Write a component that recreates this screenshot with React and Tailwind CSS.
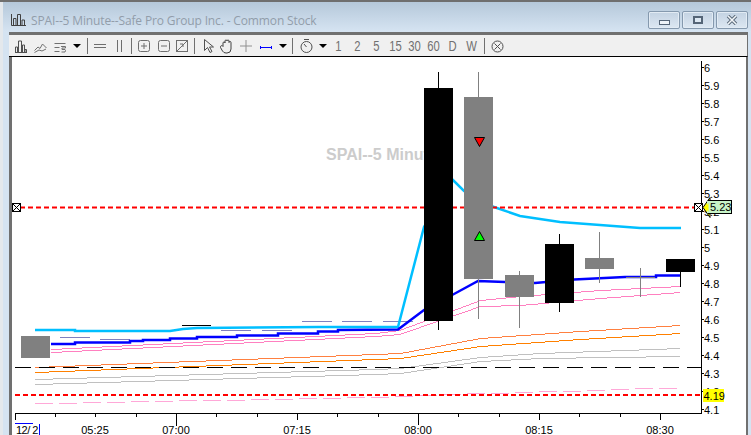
function yAt(pts, x) {
  let seg = 0;
  while (seg < pts.length - 2 && x >= pts[seg + 1][0]) seg++;
  const [ax, ay] = pts[seg];
  const [bx, by] = pts[seg + 1];
  return Math.round(ay + ((by - ay) * (x - ax)) / (bx - ax)) + 0.5;
}

function lad(pts, step = 0, gap = 0) {
  const x0 = pts[0][0];
  const x1 = pts[pts.length - 1][0];
  let d = "";
  if (step) {
    for (let x = x0; x < x1; x += step) {
      d += `M${x} ${yAt(pts, x)}H${Math.min(x + step - gap, x1)}`;
    }
    return d;
  }
  let start = x0;
  let y = yAt(pts, x0);
  for (let x = x0 + 1; x <= x1; x++) {
    const ny = yAt(pts, x);
    if (ny !== y || x === x1) {
      d += `M${start} ${y}H${x}`;
      start = x;
      y = ny;
    }
  }
  return d;
}

const prices = ["6", "5.9", "5.8", "5.7", "5.6", "5.5", "5.4", "5.3", "5.2", "5.1", "5", "4.9", "4.8", "4.7", "4.6", "4.5", "4.4", "4.3", "4.2", "4.1"];

const ticks = [15.5, 55.5, 95.5, 136.5, 176.5, 216.5, 257.5, 297.5, 337.5, 378.5, 418.5, 458.5, 499.5, 539.5, 579.5, 620.5, 660.5];
const longT = { 176.5: 426, 418.5: 425, 15.5: 420, 297.5: 420, 539.5: 420, 660.5: 420 };

const Candle = ({ x, top, bot, wt, wb, c }) => (
  <g>
    <line x1={x + 14.5} x2={x + 14.5} y1={wt} y2={top} stroke={c} />
    <line x1={x + 14.5} x2={x + 14.5} y1={bot} y2={wb} stroke={c} />
    <rect x={x} y={top} width="29" height={bot - top} fill={c} />
  </g>
);

const L = ({ pts, c, step, gap }) => (
  <path d={lad(pts, step, gap)} fill="none" stroke={c} shapeRendering="crispEdges" />
);

function Chart() {
  return (
    <svg width="734" height="378" viewBox="12 57 734 378" className="block shrink-0" style={{ fontFamily: '"Liberation Sans", Arial, sans-serif' }}>
      <text x="326" y="160" fontSize="16" fontWeight="700" fill="#cccccc">SPAI--5 Minute</text>

      <L pts={[[35, 403], [375, 397], [400, 396], [480, 393], [680, 387]]} c="#ffa8d8" step={24} gap={6} />
      <L pts={[[35, 379], [375, 369], [400, 368], [480, 357], [540, 353], [680, 348]]} c="#c0c0c0" />
      <L pts={[[35, 384], [375, 374], [400, 373], [480, 361], [540, 358], [680, 356]]} c="#c0c0c0" />
      <L pts={[[35, 367], [375, 354], [400, 353], [480, 338], [580, 331], [680, 325]]} c="#ff8040" />
      <L pts={[[35, 372], [375, 359], [400, 358], [480, 346], [580, 339], [680, 333]]} c="#ff8000" />
      <L pts={[[51, 349], [375, 333], [399, 330], [440, 315], [480, 300], [520, 296], [600, 290], [680, 286]]} c="#ff80c0" />
      <L pts={[[51, 352], [375, 336], [399, 334], [440, 320], [480, 306], [520, 305], [600, 298], [680, 292]]} c="#ff80c0" />

      <g stroke="#8080c0">
        <line x1="60" x2="90" y1="337.5" y2="337.5" />
        <line x1="100" x2="130" y1="339.5" y2="339.5" />
        <line x1="141" x2="171" y1="330.5" y2="330.5" />
        <line x1="221" x2="251" y1="330.5" y2="330.5" />
        <line x1="262" x2="292" y1="330.5" y2="330.5" />
        <line x1="302" x2="332" y1="321.5" y2="321.5" />
        <line x1="342" x2="372" y1="321.5" y2="321.5" />
        <line x1="383" x2="413" y1="321.5" y2="321.5" />
      </g>
      <line x1="182" x2="211" y1="325.5" y2="325.5" stroke="#000" />

      <polyline points="35,330 75,330 75,331 170,331 183,329 197,328 318,327 398,327 424,227 453,180 464,191 494,207 520,216 560,222 600,225 640,228 681,228" fill="none" stroke="#00bfff" strokeWidth="2.5" />
      <polyline points="51,344 75,344 75,342.500 130,342.500 130,341 143,341 143,340 170,340 170,338.500 197,338.500 197,337 237,337 237,335.500 278,335.500 278,333.500 318,333.500 318,331.500 338,331.500 338,330 398,329.500 424,310 454,294 478,281 505,282 535,283 574,279.500 625,277 656,277 656,275.500 680,275.500" fill="none" stroke="#0000ff" strokeWidth="2.5" />

      <line x1="20" x2="697" y1="207.5" y2="207.5" stroke="#ff0000" strokeWidth="2" strokeDasharray="5 3" />
      <line x1="15" x2="701" y1="367.5" y2="367.5" stroke="#000" strokeDasharray="16 8" />
      <line x1="15" x2="701" y1="395" y2="395" stroke="#ff0000" strokeWidth="2" strokeDasharray="5 3" />

      <Candle x={21} top={336} bot={358} wt={336} wb={358} c="#808080" />
      <Candle x={424} top={88} bot={321} wt={72} wb={330} c="#000000" />
      <Candle x={464} top={97} bot={279} wt={72} wb={319} c="#808080" />
      <Candle x={505} top={275} bot={297} wt={271} wb={328} c="#808080" />
      <Candle x={545} top={244} bot={303} wt={234} wb={312} c="#000000" />
      <Candle x={585} top={258} bot={269} wt={232} wb={283} c="#808080" />
      <line x1="626" x2="655" y1="277.5" y2="277.5" stroke="#808080" />
      <line x1="640.5" x2="640.5" y1="268" y2="297" stroke="#808080" />
      <Candle x={666} top={259} bot={272} wt={259} wb={287} c="#000000" />

      <polygon points="474.5,137.5 484.5,137.5 479.5,146.5" fill="#ff0000" stroke="#000" />
      <polygon points="479.5,231.5 484.5,240.5 474.5,240.5" fill="#00ff00" stroke="#000" />

      <line x1="701.5" x2="701.5" y1="61" y2="414" stroke="#000" />
      <g fontSize="11" fill="#000">
        {prices.map((p, i) => (
          <g key={p}>
            <line x1="701" x2="704" y1={67.5 + i * 18} y2={67.5 + i * 18} stroke="#000" />
            <text x="704" y={71.5 + i * 18}>{p}</text>
          </g>
        ))}
      </g>
      <line x1="15" x2="701" y1="413.5" y2="413.5" stroke="#000" />
      {ticks.map((t) => (
        <line key={t} x1={t} x2={t} y1="413" y2={longT[t] || 417} stroke="#000" />
      ))}
      <g fontSize="11" fill="#000" textAnchor="middle">
        <text x="95" y="434">05:25</text>
        <text x="176" y="434">07:00</text>
        <text x="297" y="434">07:15</text>
        <text x="418" y="434">08:00</text>
        <text x="539" y="434">08:15</text>
        <text x="660" y="434">08:30</text>
      </g>
      <text x="16" y="434" fontSize="11" fill="#000" letterSpacing="-0.5">12/ 2</text>
      <line x1="15" x2="33" y1="423.5" y2="423.5" stroke="#0000ff" />
      <line x1="39.5" x2="39.5" y1="424" y2="435" stroke="#0000ff" />

      <rect x="703" y="389" width="21" height="13" fill="#ffff00" />
      <text x="703.5" y="399.5" fontSize="11" fill="#000">4.19</text>

      <g fill="#fff" stroke="#000">
        <rect x="12.5" y="203.5" width="8" height="8" />
        <path d="M13 204 L20 211 M20 204 L13 211" />
        <rect x="694.5" y="203.5" width="8" height="8" />
        <path d="M695 204 L702 211 M702 204 L695 211" />
      </g>

      <polygon points="703,207.5 710,197.500 710,217.500" fill="#ffff00" stroke="#000" />
      <rect x="708.5" y="200.5" width="23" height="13" fill="#c8f4c8" stroke="#000" />
      <rect x="707" y="201" width="4" height="12" fill="#c8f4c8" />
      <polygon points="705,207.500 708.500,203 708.500,212" fill="#ffff00" />
      <text x="710" y="211" fontSize="11" fill="#000">5.23</text>
    </svg>
  );
}

const I = ({ w = 12, ml, children }) => (
  <svg width={w} height="18" viewBox={`0 0 ${w} 18`} fill="none" stroke="#6e6e6e" strokeWidth="1" className={`block shrink-0 ${ml}`}>
    {children}
  </svg>
);
const Sep = ({ ml }) => <div className={`w-px h-[16px] bg-[#707070] shrink-0 ${ml}`} />;
const Arrow = ({ ml }) => <div className={`w-0 h-0 border-x-[4px] border-x-transparent border-t-[4px] border-t-black shrink-0 ${ml}`} />;
const Num = ({ children }) => (
  <span className="w-[19px] text-[15px] leading-none text-[#707070] text-center shrink-0 scale-x-75 font-['Liberation_Sans']">
    {children}
  </span>
);

function Toolbar() {
  return (
    <div className="flex items-center h-[21px] bg-[#f0f0f0] pl-[6px] border-b border-b-black border-r border-r-[#707070] box-content">
      <I w={12}><path d="M.5 15.500V10h2v5.500M3.500 15.500V4h3v11.500M7.500 15.500V8h2v7.500M10 15.500v-3h1.500v3M0 15.500h12" stroke="#505050" /></I>
      <I w={13} ml="ml-[7px]"><path d="M.5 13.500 4 10l2 1.500L8.500 7l4 4M.5 15.500 5 13l3 1 4-2" stroke="#707070" /></I>
      <I w={12} ml="ml-[7px]"><path d="M.5 6.500h11M.5 10.500h5M.5 14.500h5M7 9.500h4.500v1.500h-3.500v1.500h3l.5 1-.5 1.500h-3.500" stroke="#707070" /></I>
      <Arrow ml="ml-[7px]" />
      <Sep ml="ml-[6px]" />
      <I w={12} ml="ml-[6px]"><path d="M0 7.500h12M0 10.500h12" /></I>
      <I w={7} ml="ml-[10px]"><path d="M1.500 3v12M5.500 3v12" /></I>
      <Sep ml="ml-[8px]" />
      <I w={12} ml="ml-[6px]"><rect x=".5" y="3.500" width="11" height="11" rx="2" /><path d="M3 9h6M6 6v6" /></I>
      <I w={12} ml="ml-[8px]"><rect x=".5" y="3.500" width="11" height="11" rx="2" /><path d="M3 9h6" /></I>
      <I w={12} ml="ml-[6px]"><rect x=".5" y="3.500" width="11" height="11" /><path d="M1 14 11 4M4 7h3v3" /></I>
      <Sep ml="ml-[6px]" />
      <I w={11} ml="ml-[8px]"><path d="M1.500 2.500v11l3-3 2.500 5 2-1-2.500-4.500h4z" stroke="#505050" /></I>
      <I w={13} ml="ml-[6px]"><path d="M3 9.500V6a1 1 0 0 1 2 0V4a1 1 0 0 1 2 0v0a1 1 0 0 1 2 0v1.500a1 1 0 0 1 2 0V12a4 4 0 0 1-4 4h-1a4 4 0 0 1-3.500-2L.5 10.500a1 1 0 0 1 2.500-1z" stroke="#404040" /></I>
      <I w={12} ml="ml-[7px]"><path d="M6 3v12M0 9h12" stroke="#909090" /></I>
      <I w={12} ml="ml-[8px]"><path d="M0 10.500h12" stroke="#0000ff" /><path d="M.5 9v3M11.500 9v3" stroke="#0000ff" /></I>
      <Arrow ml="ml-[7px]" />
      <Sep ml="ml-[5px]" />
      <I w={13} ml="ml-[7px]"><circle cx="6.500" cy="10" r="5.500" stroke="#505050" /><path d="M6.500 10 4 7M4 2.500h5" stroke="#505050" /></I>
      <Arrow ml="ml-[6px]" />
      <span className="ml-[2px] flex items-center">
        <Num>1</Num>
        <Num>2</Num>
        <Num>5</Num>
        <Num>15</Num>
        <Num>30</Num>
        <Num>60</Num>
        <Num>D</Num>
        <Num>W</Num>
      </span>
      <Sep ml="ml-[3px]" />
      <I w={13} ml="ml-[6px]"><circle cx="6.500" cy="9.500" r="5.500" stroke="#505050" /><path d="M3.500 6.500l6 6M9.500 6.500l-6 6" stroke="#505050" /></I>
    </div>
  );
}

const WinBtn = ({ children }) => (
  <div className="w-[32px] h-[18px] rounded-[2px] border border-[#8599ae] bg-[linear-gradient(#c3d2e2,#dce7f2)] shadow-[inset_0_0_0_1px_#e2ebf4] flex items-center justify-center">
    {children}
  </div>
);

export default function App() {
  return (
    <div className="w-[751px] h-[435px] overflow-hidden flex flex-col bg-[#d5e3f1] font-['Liberation_Sans']">
      <div className="h-[2px] bg-[#6f6f6f] shrink-0" />
      <div className="h-[30px] shrink-0 flex bg-[linear-gradient(#b5c8da,#d6e4f2)] border-l-[3px] border-l-[#e4e8ec] pl-[8px] pr-[3px]">
        <svg width="17" height="14" viewBox="0 0 17 14" fill="none" stroke="#404040" className="mt-[11px] block shrink-0">
          <path d="M.500 1v11.500H15M2.500 12V5.500h2.500V12M6.500 12V1.500h3V12M11 12V7h2.500v5" />
        </svg>
        <div className="ml-[3px] mt-[10px] text-[12px] leading-[18px] text-[#929daa] tracking-[-0.14px] font-['Open_Sans'] whitespace-nowrap">
          SPAI--5 Minute--Safe Pro Group Inc. - Common Stock
        </div>
        <div className="ml-auto flex gap-[2px] mt-[9px] h-[18px]">
          <WinBtn><div className="w-[11px] h-[5px] mt-[4px] bg-[#eef3f8] border border-[#556577]" /></WinBtn>
          <WinBtn><div className="w-[10px] h-[8px] bg-[#dce7f2] border-2 border-[#556577]" /></WinBtn>
          <WinBtn><svg width="12" height="10" viewBox="0 0 12 10"><path d="M2 1l8 8M10 1 2 9" stroke="#5d6c7c" strokeWidth="3.500" /><path d="M2 1l8 8M10 1 2 9" stroke="#f4f7fa" strokeWidth="1.500" /></svg></WinBtn>
        </div>
      </div>
      <div className="flex-1 min-h-0 flex pr-[3px]">
        <div className="w-[9px] bg-[#d5e3f1] border-l-[3px] border-l-[#e4e8ec] shrink-0" />
        <div className="flex-1 min-w-0 flex flex-col border-t-[3px] border-t-[#707070]">
          <Toolbar />
          <div className="flex-1 min-h-0 flex bg-white">
            <div className="w-[3px] bg-[#707070] shrink-0" />
            <Chart />
            <div className="w-[2px] bg-[#707070] shrink-0" />
          </div>
        </div>
      </div>
    </div>
  );
}
